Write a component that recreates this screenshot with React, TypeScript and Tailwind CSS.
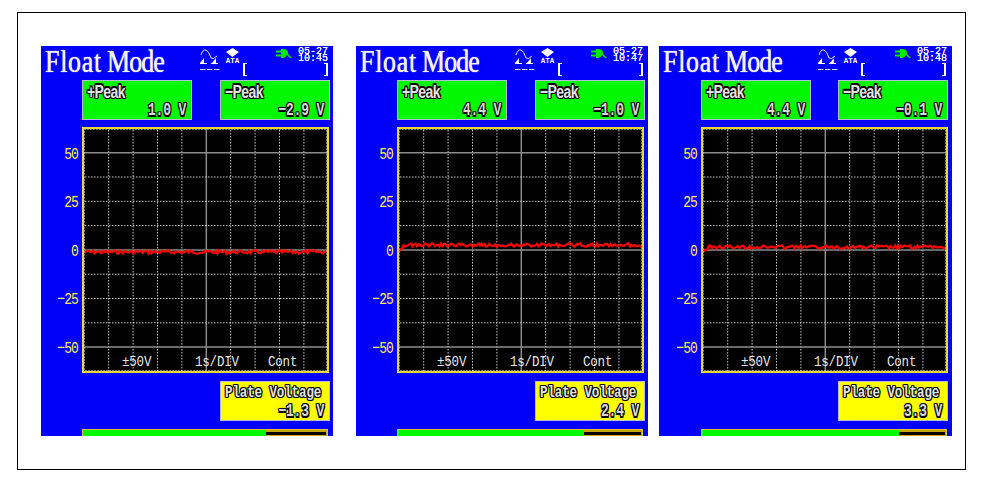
import React from "react";

const outline = "[text-shadow:1px_0_0_#000,-1px_0_0_#000,0_1px_0_#000,0_-1px_0_#000,1px_1px_0_#333,-1px_-1px_0_#333,1px_-1px_0_#333,-1px_1px_0_#333]";

function trace(base: number, seed: number, rise: boolean) {
  let s = seed;
  const pts: string[] = [];
  for (let x = 2; x <= 245; x += 1.5) {
    s = (s * 9301 + 49297) % 233280;
    const n = (s / 233280 - 0.5) * 3.4;
    const lift = rise ? Math.max(0, 5 - (x - 2) * 0.9) : 0;
    pts.push(`${x},${(base + lift + n).toFixed(1)}`);
  }
  return pts.join(" ");
}

function ChartDrawing({ base, seed, rise }: { base: number; seed: number; rise: boolean }) {
  const xs = Array.from({ length: 9 }, (_, i) => 26.7 + 24.4 * i);
  const ys = Array.from({ length: 9 }, (_, i) => 25.7 + 24.3 * i);
  return (
    <svg width="247" height="246" viewBox="0 0 247 246" className="block bg-black">
      {xs.map((x, i) =>
        i === 4 ? (
          <line key={i} x1={x} x2={x} y1="2" y2="244" stroke="#8c8c8c" strokeWidth="1.5" />
        ) : (
          <line key={i} x1={x} x2={x} y1="3" y2="244" stroke="#c8c8c8" strokeWidth="1" strokeDasharray="1.5 1.5" />
        )
      )}
      {ys.map((y, i) =>
        i === 0 || i === 4 || i === 8 ? (
          <line key={i} x1="2" x2="245" y1={y} y2={y} stroke="#8c8c8c" strokeWidth="1.5" />
        ) : (
          <line key={i} x1="3" x2="244" y1={y} y2={y} stroke="#c8c8c8" strokeWidth="1" strokeDasharray="1.5 1.5" />
        )
      )}
      <polyline points={trace(base, seed, rise)} fill="none" stroke="#ff0000" strokeWidth="2.2" />
      <rect x="1" y="1" width="245" height="244" fill="none" stroke="#e8d838" strokeWidth="2" />
      <rect x="2.5" y="2.5" width="242" height="241" fill="none" stroke="#e0e0e0" strokeWidth="1" strokeDasharray="1 2" />
    </svg>
  );
}

function WaveIcon() {
  return (
    <svg width="22" height="26" viewBox="0 0 22 26" className="block">
      <path d="M2 7 Q4 1 7 2 T12 10 Q14 12 18 8" fill="none" stroke="#fff" strokeWidth="0.9" />
      <path d="M1 15 L5 10 L5 15 Z M13 15 L17 10 L17 15 Z" fill="#fff" />
      <rect x="1" y="15" width="7" height="1" fill="#fff" />
      <rect x="12" y="15" width="7" height="1" fill="#fff" />
      <rect x="1" y="21" width="5.5" height="1" fill="#d8d8ff" />
      <rect x="8" y="21" width="5.5" height="1" fill="#d8d8ff" />
      <rect x="15" y="21" width="5.5" height="1" fill="#d8d8ff" />
    </svg>
  );
}

function AtaIcon() {
  return (
    <div className="flex flex-col items-center w-[15px]">
      <svg width="13" height="9" viewBox="0 0 13 9" className="block">
        <path d="M6.5 0 L13 4 L6.5 9 L0 4 Z" fill="#fff" />
      </svg>
      <span className="font-['Liberation_Mono',monospace] font-bold text-[7.5px] leading-[8px] text-white">ATA</span>
    </div>
  );
}

function PlugIcon() {
  return (
    <svg width="16" height="10" viewBox="0 0 16 10" className="block">
      <rect x="0" y="1.5" width="6" height="2" fill="#00e800" />
      <rect x="0" y="5.5" width="6" height="2" fill="#00e800" />
      <path d="M5 0h2.5Q12 0 12 4v1l4 4h-2l-3-3Q9.500 9 7.500 9H5Z" fill="#00e800" />
    </svg>
  );
}

function ValueBox({ label, value, wide }: { label: string; value: string; wide?: boolean }) {
  return (
    <div className={`w-[110px] h-[40px] border border-[#b8bcd8] ${wide ? "bg-[#ffff00]" : "bg-[#00f800]"} flex flex-col px-[4px]`}>
      <div
        className={`${outline} text-[#e4e4e4] font-bold leading-[17px] whitespace-nowrap scale-y-[1.35] ${
          wide
            ? "font-['Liberation_Mono',monospace] text-[12.5px] tracking-[-0.1px] mt-[3px]"
            : "font-['Liberation_Sans',sans-serif] text-[14px] tracking-[-0.6px] mt-[2px] origin-left"
        }`}
      >
        {label}
      </div>
      <div className={`${outline} text-[#d8d8d8] font-bold font-['Liberation_Mono',monospace] text-[13px] leading-[18px] text-right tracking-[-0.2px] whitespace-pre pr-[1px] scale-y-[1.4] ${wide ? "mt-[1px]" : "mt-[2px]"}`}>
        {value}
      </div>
    </div>
  );
}

type P = {
  width: string;
  pl: string;
  gap: string;
  plateW: string;
  time: string;
  plus: string;
  minus: string;
  plate: string;
  base: number;
  seed: number;
  rise: boolean;
  bar: string;
};

function Panel({ width, pl, gap, plateW, time, plus, minus, plate, base, seed, rise, bar }: P) {
  return (
    <div className={`${width} h-[390px] bg-[#0000f8] shrink-0 flex flex-col`}>
      <div className="h-[34px] flex items-start relative shrink-0">
        <div className="font-['Liberation_Serif',serif] text-[26px] leading-[26px] text-[#f4f4f4] pl-[4px] w-[158px] whitespace-nowrap scale-y-[1.22] origin-top flex gap-[5px] [text-shadow:0_0_1px_#fff]">
          <span className="tracking-[0.7px]">Float</span>
          <span className="tracking-[-0.9px]">Mode</span>
        </div>
        <div className="pt-[2px]"><WaveIcon /></div>
        <div className="pt-[2px] ml-[4px]"><AtaIcon /></div>
        <div className="mt-[17px] ml-[3px] w-[85px] h-[13px] flex justify-between">
          <div className="w-[4px] h-full border-l-2 border-y border-white" />
          <div className="w-[4px] h-full border-r-2 border-y border-white" />
        </div>
        <div className="absolute right-[41px] top-[3px]"><PlugIcon /></div>
        <div className="absolute right-[5px] top-[2px] font-['Liberation_Mono',monospace] text-[10px] leading-[7px] text-white text-right whitespace-pre [text-shadow:0_0_0.5px_#fff]">
          {"05-27\n" + time}
        </div>
      </div>
      <div className={`flex flex-col ${pl}`}>
        <div className={`flex ${gap}`}>
          <ValueBox label="+Peak" value={plus} />
          <ValueBox label="−Peak" value={minus} />
        </div>
        <div className="relative mt-[7px] w-[247px] h-[246px]">
          <ChartDrawing base={base} seed={seed} rise={rise} />
          <div className="absolute right-[251px] top-[2.5px] flex flex-col items-end font-['Liberation_Mono',monospace] text-[13px] text-[#ffee50] tracking-[-0.9px]">
            {["50", "25", "0", "−25", "−50"].map((t) => (
              <div key={t} className="h-[48.6px] flex items-center pt-[1px] scale-y-[1.3]">{t}</div>
            ))}
          </div>
          <div className="absolute inset-x-0 top-[228px] font-['Liberation_Mono',monospace] text-[12.5px] leading-[16px] text-[#e8e8e8] tracking-[-0.2px]">
            <span className="absolute left-[40px] scale-y-[1.15]">±50V</span>
            <span className="absolute left-[113px] scale-y-[1.15]">1s/DIV</span>
            <span className="absolute left-[186px] scale-y-[1.15]">Cont</span>
          </div>
        </div>
        <div className={`mt-[8px] flex justify-end ${plateW}`}>
          <ValueBox wide label="Plate Voltage" value={plate} />
        </div>
        <div className="mt-[8px] w-[246px] h-[7px] border-t border-x border-[#d8c040] bg-[#c8a800] flex">
          <div className={`${bar} bg-[#00f800] h-full`} />
          <div className="flex-1 mt-[2px] mr-[1px] h-[3px] bg-black" />
        </div>
      </div>
    </div>
  );
}

export default function App() {
  return (
    <div className="w-[1001px] h-[477px] bg-white pt-[12px] pl-[17px]">
      <div className="w-[949px] h-[458px] border border-black flex items-start pt-[33px] pl-[23px] box-border">
        <Panel width="w-[292px]" pl="pl-[41px]" gap="gap-[28px]" plateW="w-[248px]" time="10:45" plus="1.0 V" minus="−2.9 V" plate="−1.3 V" base={125} seed={7} rise={false} bar="w-[183px]" />
        <div className="w-[23px] shrink-0" />
        <Panel width="w-[292px]" pl="pl-[41px]" gap="gap-[28px]" plateW="w-[248px]" time="10:47" plus="4.4 V" minus="−1.0 V" plate="2.4 V" base={118} seed={91} rise={true} bar="w-[186px]" />
        <div className="w-[11px] shrink-0" />
        <Panel width="w-[293px]" pl="pl-[42px]" gap="gap-[27px]" plateW="w-[247px]" time="10:48" plus="4.4 V" minus="−0.1 V" plate="3.3 V" base={120} seed={33} rise={true} bar="w-[197px]" />
      </div>
    </div>
  );
}
